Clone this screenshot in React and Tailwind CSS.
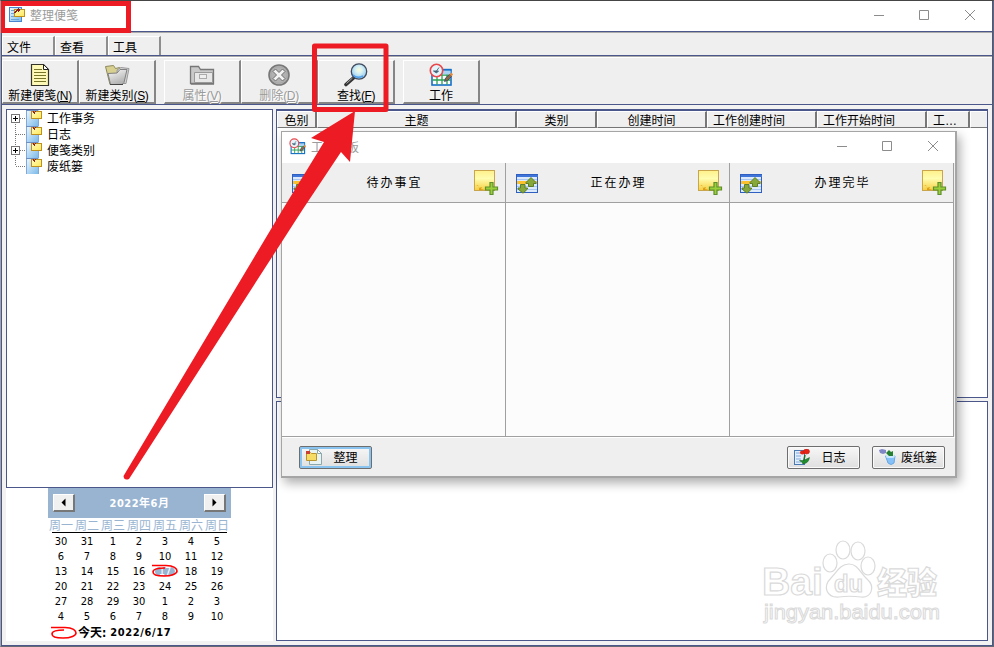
import React from 'react';

const Svg = ({ w, h = w, vb, children, className = '' }) => (
  <svg width={w} height={h} viewBox={vb || `0 0 ${w} ${h}`} className={`block shrink-0 ${className}`}>{children}</svg>
);

function NotesIcon({ small }) {
  return (
    <Svg w={small ? 16 : 17} h={16} vb={small ? '0 0 16 16' : '0 0 17 16'}>
      <defs>
        <linearGradient id="page" x1="0" y1="0" x2="1" y2="1">
          <stop offset="0" stopColor="#f4faff" />
          <stop offset="1" stopColor="#77b8e8" />
        </linearGradient>
        <linearGradient id="memo" x1="0" y1="0" x2="1" y2="1">
          <stop offset="0" stopColor="#fffdb8" />
          <stop offset="1" stopColor="#ffe75a" />
        </linearGradient>
      </defs>
      {small ? (
        <>
          <rect x="0" y="0" width="13" height="16" fill="url(#page)" />
          <path d="M0.500 0v16M12.500 9v7" stroke="#7fa9dc" />
          <path d="M0 0.500h12" stroke="#6f8fc0" />
          <rect x="5.500" y="1.500" width="10" height="7" fill="url(#memo)" stroke="#c0901c" />
          <path d="M7 1h1v1h1v2H8V3H7zM9 1h1v1H9z" fill="#9b1c24" />
        </>
      ) : (
        <>
          <rect x="0.500" y="0.500" width="12" height="14" fill="url(#page)" stroke="#4a86d0" />
          <path d="M2 3.500h3M2 6.500h3M2 9.500h3M2 12.500h8" stroke="#6ba3dc" />
          <rect x="5.500" y="2.500" width="10" height="7" fill="url(#memo)" stroke="#c0901c" />
          <path d="M5 5h1V4h1V3h1V2h1V1h1v1h1v2h-1v1H9V4H8v1H7v1H5z" fill="#8d1d20" />
        </>
      )}
    </Svg>
  );
}

function WorkIcon({ size }) {
  return (
    <Svg w={size} vb="0 0 24 24">
      <rect x="3" y="7" width="19" height="15" fill="#fff" stroke="#1470c8" strokeWidth="1.600" />
      <path d="M3.500 12h18M3.500 17h18M8 7.500v14M13 7.500v14M18 7.500v14" stroke="#2aa052" strokeWidth="1.300" />
      <path d="M13.500 7.500h8v4h-8z" fill="#a9d3f5" />
      <path d="M12.500 6.600h10" stroke="#1470c8" strokeWidth="1.600" />
      <circle cx="7.500" cy="7.500" r="6.200" fill="#e4f4fb" stroke="#e9484d" strokeWidth="1.600" />
      <path d="M4.500 8h5L7.500 10zM7.500 8l2.500-3.500" stroke="#44647c" strokeWidth="0.900" fill="#44647c" />
      <path d="M15.500 18.500l1-3.500 4-3.500 2 2-4 4z" fill="#8b6b43" stroke="#34346b" strokeWidth="0.700" />
      <path d="M20.500 11.500l2-2 1.500 2-1.500 2z" fill="#e68a37" />
    </Svg>
  );
}

function PageIcon() {
  return (
    <Svg w={24}>
      <path d="M3.500 1.500h12l5 5v16h-17z" fill="#fff9b8" stroke="#34342a" strokeWidth="1.200" />
      <path d="M15.500 1.500v5h5z" fill="#fff" stroke="#222" />
      <path d="M6 6.500h8M6 9.500h12M6 12.500h12M6 15.500h12M6 18.500h12" stroke="#77752a" />
    </Svg>
  );
}

function FolderIcon() {
  return (
    <Svg w={26} h={24}>
      <defs>
        <linearGradient id="folder" x1="0" y1="0" x2="0.500" y2="1">
          <stop offset="0" stopColor="#fafafa" />
          <stop offset="1" stopColor="#b1b1b1" />
        </linearGradient>
      </defs>
      <path d="M1.500 3.500l8-1 2 3 4-1v17H6z" fill="#d8d090" stroke="#8d895f" />
      <path d="M13 7l4-2.500 8 1-3 15h-8z" fill="#d4d4d4" stroke="#999" />
      <path d="M4 10.500l9-.5 3-3.500h7l-3 13-2 2H6.500z" fill="url(#folder)" stroke="#808080" />
      <path d="M6 21.500h13" stroke="#444" />
    </Svg>
  );
}

function PropertyIcon() {
  return (
    <Svg w={26} h={24}>
      <path d="M1.500 20.500v-17h8l2 3h13v14z" fill="#c9c9c9" stroke="#777" strokeWidth="1.300" />
      <path d="M5.500 19.500v-10h18v10z" fill="#e7e7e7" stroke="#999" />
      <rect x="10.500" y="11.500" width="7" height="4" fill="#eee" stroke="#aaa" />
      <path d="M2 21h23" stroke="#777" strokeWidth="1.400" />
    </Svg>
  );
}

function DeleteIcon() {
  return (
    <Svg w={24}>
      <circle cx="12" cy="12" r="10" fill="#b1b1b1" stroke="#777" strokeWidth="1.600" />
      <circle cx="12" cy="12" r="8.200" fill="none" stroke="#a8a8a8" />
      <path d="M6 8.500L8.500 6l3.500 3.500L15.500 6 18 8.500 14.500 12l3.500 3.500-2.500 2.500-3.500-3.500L8.500 18 6 15.500 9.500 12z" fill="#f2f2f2" stroke="#6d6d6d" />
    </Svg>
  );
}

function FindIcon() {
  return (
    <Svg w={24}>
      <defs>
        <radialGradient id="lens" cx="0.500" cy="0.400">
          <stop offset="0" stopColor="#fffbd5" />
          <stop offset="0.450" stopColor="#d7f1f4" />
          <stop offset="1" stopColor="#9ed0f2" />
        </radialGradient>
      </defs>
      <path d="M2 21.500l8-7" stroke="#333" strokeWidth="3.600" strokeLinecap="round" />
      <path d="M2.500 20.500l6-5.500" stroke="#aaa" />
      <circle cx="15" cy="8.500" r="7.700" fill="url(#lens)" stroke="#414a5c" strokeWidth="1.300" />
      <path d="M9 12q4 4 10 1" stroke="#4f9fea" strokeWidth="1.500" fill="none" />
    </Svg>
  );
}

function Label({ text, k, disabled }) {
  return (
    <span className={`whitespace-nowrap text-[12px] leading-[14px] ${disabled ? 'text-[#9a9a9a] [text-shadow:1px_1px_0_#fff]' : 'text-black'}`}>
      {text}
      {k && <span className="tracking-[-0.400px]">(<u className="underline-offset-1">{k}</u>)</span>}
    </span>
  );
}

function Tool({ icon, text, k, disabled, className = '' }) {
  return (
    <div className={`flex h-[44px] w-[77px] shrink-0 flex-col items-center border-t border-r-2 border-b-2 border-l border-t-white border-l-white border-r-[#858585] border-b-[#858585] bg-[#efefef] pt-[2px] ${className}`}>
      {icon}
      <div className="mt-[2px] flex h-[14px] items-center"><Label text={text} k={k} disabled={disabled} /></div>
    </div>
  );
}

function WindowControls({ className = '' }) {
  return (
    <Svg w={102} h={12} className={className}>
      <path d="M0 6.500h10M45.500 1.500h9v9h-9zM91 1l10 10M101 1l-10 10" fill="none" stroke="#8c8c8c" />
    </Svg>
  );
}

const heads = [
  ['色别', 'w-[40px] justify-center border-r-2'], ['主题', 'w-[200px] justify-center border-r-2'], ['类别', 'w-[80px] justify-center border-r-2'],
  ['创建时间', 'w-[110px] justify-center border-r-2'], ['工作创建时间', 'w-[110px] pl-[5px] border-r-2'], ['工作开始时间', 'w-[110px] pl-[5px] border-r-2'],
  ['工…', 'w-[43px] pl-[5px] border-r-2'], ['', 'grow'],
];

function TreeItem({ name, expandable, last }) {
  return (
    <div className="flex h-[16px] items-center">
      <Svg w={27} h={16}>
        <path d={last ? 'M8.500 0v8' : expandable === 'first' ? 'M8.500 8v8' : 'M8.500 0v16'} stroke="#777" strokeDasharray="1 1" />
        <path d="M9 8.500h10" stroke="#777" strokeDasharray="1 1" />
        {expandable && <><rect x="4.500" y="4.500" width="8" height="8" fill="#fff" stroke="#777" /><path d="M6 8.500h5M8.500 6v5" stroke="#000" /></>}
      </Svg>
      <div className="-ml-[8px]"><NotesIcon small /></div>
      <span className="mt-[2px] ml-[5px] text-[12px] leading-[16px]">{name}</span>
    </div>
  );
}

const days = [30, 31, 1, 2, 3, 4, 5, 6, 7, 8, 9, 10, 11, 12, 13, 14, 15, 16, 17, 18, 19, 20, 21, 22, 23, 24, 25, 26, 27, 28, 29, 30, 1, 2, 3, 4, 5, 6, 7, 8, 9, 10];

const TodayRing = ({ className = '' }) => (
  <Svg w={26} h={14} className={className}>
    <path d="M0 1.500h14c8 0 11 3 11 5.500s-5 5-13 5S1 10.500 1 8s5-4 12-4" fill="none" stroke="#f00" strokeWidth="1.600" />
  </Svg>
);

function MonthButton({ left }) {
  return (
    <div className="flex h-[18px] w-[22px] items-center justify-center border-t border-r-2 border-b-2 border-l border-t-white border-l-white border-r-[#777] border-b-[#777] bg-[#f0f0f0]">
      <Svg w={5} h={9}><path d={left ? 'M4.500 0.500v8l-4-4z' : 'M0.500 0.500v8l4-4z'} /></Svg>
    </div>
  );
}

function Calendar() {
  return (
    <div className="h-[153px] w-[267px] bg-white pl-[42px] [font-family:'DejaVu_Sans_Condensed','DejaVu_Sans','Noto_Sans_CJK_SC',sans-serif]">
      <div className="w-[183px]">
        <div className="flex h-[30px] items-center justify-between bg-[#99b4d1] px-[5px]">
          <MonthButton left />
          <span className="mt-[2px] text-[11px] font-bold tracking-[0.500px] text-white">2022年6月</span>
          <MonthButton />
        </div>
        <div className="mt-[1px] grid h-[13px] w-[182px] grid-cols-7 text-center text-[12px] leading-[15px] text-[#99b4d1]">
          {['周一', '周二', '周三', '周四', '周五', '周六', '周日'].map((d) => <span key={d}>{d}</span>)}
        </div>
        <div className="ml-[4px] h-[1px] w-[175px] bg-black" />
        <div className="mt-[1px] grid w-[182px] grid-cols-7 text-center text-[11px] leading-[15px]">
          {days.map((d, i) => (
            <div key={i} className="relative h-[15px]">
              {i === 18 && <div className="absolute top-[3px] left-[3px] h-[9px] w-[20px] rounded-full bg-[#99b4d1]" />}
              <span className={`relative ${i === 18 ? 'text-white' : ''}`}>{d}</span>
              {i === 18 && <TodayRing className="absolute top-0 left-0" />}
            </div>
          ))}
        </div>
        <div className="mt-[2px] ml-[3px] flex h-[14px] items-center whitespace-nowrap text-[11px] font-bold">
          <TodayRing /><span className="ml-[1px] text-[12px]">今天:</span><span className="ml-[4px] tracking-[0.600px]">2022/6/17</span>
        </div>
      </div>
    </div>
  );
}

const SortIcon = () => (
  <Svg w={24} h={20}>
    <rect x="0.500" y="0.500" width="21" height="18" fill="#dceafc" stroke="#2f5fc0" />
    <path d="M1 2h21" stroke="#3f74d8" strokeWidth="2" />
    <path d="M1 5.500h20M1 12.500h20M1 15.500h20" stroke="#a9c6f0" />
    <path d="M1 8.500h20" stroke="#fbc02d" strokeWidth="3" />
    <path d="M15 3.500l5 5v1h-2.500v3h-5v-3H10v-1z" fill="#86a83a" stroke="#5d7d26" />
    <path d="M4.500 10.500h4.500V14h2.500v1L7 19.200 2 15v-1h2.500z" fill="#86a83a" stroke="#5d7d26" />
  </Svg>
);

const AddNoteIcon = () => (
  <Svg w={25} h={25}>
    <defs>
      <linearGradient id="note" x1="0" y1="0" x2="0" y2="1">
        <stop offset="0" stopColor="#fff08a" /><stop offset="0.400" stopColor="#fffdb0" /><stop offset="1" stopColor="#f6ce40" />
      </linearGradient>
    </defs>
    <rect x="0.500" y="0.500" width="20" height="20" fill="url(#note)" stroke="#c9a54b" />
    <path d="M1 15q5 0 4 5h6l-4-1 1-2-3 1-1-3z" fill="#dc9e18" />
    <path d="M16 12.500h3v4.500h4.500v3H19v4.500h-3V20h-4.500v-3H16z" fill="#9bcf3a" stroke="#5e8f2c" strokeWidth="1.200" />
  </Svg>
);

function DialogButton({ icon, text, active, className = '' }) {
  return (
    <div className={`flex h-[23px] w-[73px] items-center rounded-[2px] border border-[#6e6e6e] bg-linear-to-b from-[#f7f7f7] to-[#dfdfdf] pl-[6px] ${active ? 'shadow-[inset_0_0_0_2px_#88c4ef]' : 'shadow-[inset_0_0_0_1px_#fafafa]'} ${className}`}>
      {icon}
      <span className="mt-[2px] mr-[2px] grow text-center text-[12px] leading-[20px]">{text}</span>
    </div>
  );
}

const TidyIcon = () => (
  <Svg w={16}>
    <path d="M3.500 0.500h8l4 4v11h-12z" fill="#e9f3f2" stroke="#8ba9ad" />
    <path d="M11.500 0.500v4h4z" fill="#fff" stroke="#8ba9ad" />
    <path d="M0.500 3.500h4l1 1h5v7h-10z" fill="#f6dc64" stroke="#b8942f" />
    <path d="M0 2h4v3H0z" fill="#c94133" />
  </Svg>
);
const DiaryIcon = () => (
  <Svg w={16}>
    <rect x="0.500" y="1.500" width="10" height="14" fill="#e3eefc" stroke="#4a79b2" />
    <path d="M2 4h5M2 7h5M2 10h5M2 13h5" stroke="#83a9d8" />
    <path d="M11 6l-2 9" stroke="#22702a" strokeWidth="1.500" />
    <ellipse cx="8.500" cy="3.500" rx="2.500" ry="2" fill="#e82115" />
    <ellipse cx="12.500" cy="2.500" rx="3" ry="2.500" fill="#e82115" stroke="#b01b12" strokeWidth="0.500" />
    <path d="M5.500 11.500l4 0 6-3q-1 6-6 6z" fill="#218e2c" stroke="#145b24" strokeWidth="0.500" />
  </Svg>
);
const TrashIcon = () => (
  <Svg w={17} h={16}>
    <path d="M6.500 7q5 3 9.500 0l-1 7q-3 3-6 0z" fill="#86c2fa" stroke="#6aa6e0" />
    <ellipse cx="11.300" cy="7.500" rx="4.500" ry="1.500" fill="#c8e8ff" />
    <path d="M7 4l3-3 2 2 2-1v5h-4z" fill="#268034" />
    <path d="M0 1l3-1 4 1v3L4 5 1 4z" fill="#7f87c5" />
  </Svg>
);

function Dialog() {
  return (
    <div className="absolute top-[131px] left-[281px] flex h-[347px] w-[676px] flex-col border border-r-2 border-b-2 border-[#a5a5a5] bg-[#efefef] shadow-[3px_5px_10px_rgba(0,0,0,0.32)]">
      <div className="flex h-[31px] shrink-0 items-center bg-white pr-[16px] pl-[7px]">
        <div className="mt-[-2px]"><WorkIcon size={17} /></div>
        <span className="ml-[5px] text-[12px] text-[#9b9b9b]">工作面板</span>
        <WindowControls className="mt-[-3px] ml-auto" />
      </div>
      <div className="flex w-[672px] shrink-0">
        {['待办事宜', '正在办理', '办理完毕'].map((t) => (
          <div key={t} className="w-[224px] border-r border-[#a0a0a0]">
            <div className="flex h-[40px] items-center border-b border-[#a0a0a0] pr-[6px] pl-[10px]">
              <div className="mt-[2px]"><SortIcon /></div>
              <span className="mr-[1px] grow text-center text-[12px] tracking-[2px]">{t}</span>
              <AddNoteIcon />
            </div>
            <div className="h-[234px] border-b border-[#a0a0a0] bg-[#fcfcfc]" />
          </div>
        ))}
      </div>
      <div className="flex grow items-center border-t border-white pr-[10px] pl-[17px]">
        <DialogButton icon={<TidyIcon />} text="整理" active />
        <DialogButton icon={<DiaryIcon />} text="日志" className="ml-auto" />
        <DialogButton icon={<TrashIcon />} text="废纸篓" className="ml-[12px]" />
      </div>
    </div>
  );
}

function Watermark() {
  return (
    <svg className="absolute top-[534px] left-[756px] [font-family:'Liberation_Sans','Noto_Sans_CJK_SC',sans-serif]" width="190" height="96" fill="#fff" stroke="#dadada" strokeWidth="1.200">
      <text x="6" y="61" fontSize="39" fontWeight="700" textLength="61" lengthAdjust="spacingAndGlyphs">Bai</text>
      <ellipse cx="74" cy="29" rx="7" ry="9" /><ellipse cx="87" cy="16" rx="7" ry="9" />
      <ellipse cx="102" cy="17" rx="7" ry="9" /><ellipse cx="112" cy="32" rx="7" ry="9" />
      <path d="M93 30c9 0 11 9 18 15 9 8 4 19-6 18-8-1-15-1-22 0-12 1-17-10-8-19 6-6 9-14 18-14z" />
      <text x="78" y="58" fontSize="23" fontWeight="700" textLength="29" lengthAdjust="spacingAndGlyphs">du</text>
      <text x="121" y="60" fontSize="31" fontWeight="900" textLength="60" lengthAdjust="spacingAndGlyphs">经验</text>
      <text x="8" y="85" fontSize="20" textLength="176" lengthAdjust="spacingAndGlyphs" strokeWidth="1">jingyan.baidu.com</text>
    </svg>
  );
}

export default function App() {
  return (
    <div className="relative flex h-[647px] w-[994px] overflow-hidden border-t border-r border-b border-l border-t-[#454545] border-r-[#65666d] border-b-[#686a73] border-l-[#a2a4aa] bg-white text-[12px] text-black [font-family:'Liberation_Sans','Noto_Sans_CJK_SC',sans-serif]">
      <div className="flex w-[992px] flex-col border-r border-b border-l border-[#4b568b] bg-[#efefef]">
        <div className="flex h-[30px] shrink-0 items-center bg-white pr-[16px] pl-[7px]">
          <div className="mt-[-2px]"><NotesIcon /></div>
          <span className="ml-[4px] text-[12px] text-[#9b9b9b]">整理便笺</span>
          <WindowControls className="mt-[-3px] ml-auto" />
        </div>
        <div className="flex h-[24px] shrink-0 border-t border-[#4b568b] pt-[4px] shadow-[inset_0_1px_0_#aaa]">
          {['文件', '查看', '工具'].map((m) => (
            <div key={m} className="h-[19px] w-[53px] border-t border-r-2 border-l border-t-white border-l-white border-r-[#8e8e8e] pt-[3px] pl-[4px] leading-[17px]">{m}</div>
          ))}
        </div>
        <div className="flex h-[49px] shrink-0 border-t border-[#4b568b] bg-[#efefef] pt-[4px] shadow-[inset_0_1px_0_#aaa,inset_0_2px_0_#fff]">
          <Tool icon={<PageIcon />} text="新建便笺" k="N" />
          <Tool icon={<FolderIcon />} text="新建类别" k="S" />
          <Tool icon={<PropertyIcon />} text="属性" k="V" disabled className="ml-[8px]" />
          <Tool icon={<DeleteIcon />} text="删除" k="D" disabled />
          <Tool icon={<FindIcon />} text="查找" k="F" />
          <Tool icon={<WorkIcon size={24} />} text="工作" className="ml-[8px]" />
        </div>
        <div className="flex grow gap-[3px] border-t border-[#4b568b] bg-[#f2f2f2] pt-[4px] pr-[4px] pb-[4px] pl-[4px]">
          <div className="w-[267px] shrink-0">
            <div className="h-[379px] border border-[#4b568b] bg-white">
              <TreeItem name="工作事务" expandable="first" />
              <TreeItem name="日志" />
              <TreeItem name="便笺类别" expandable="mid" />
              <TreeItem name="废纸篓" last />
            </div>
            <Calendar />
          </div>
          <div className="flex w-[712px] shrink-0 flex-col gap-[3px]">
            <div className="h-[289px] border border-t-2 border-[#4b568b] bg-white">
              <div className="flex h-[17px] bg-[#efefef]">
                {heads.map(([t, c]) => (
                  <div key={t} className={`flex shrink-0 items-center border-t border-b border-l border-t-white border-r-[#777] border-b-[#777] border-l-white pt-[2px] leading-[14px] ${c}`}>{t}</div>
                ))}
              </div>
            </div>
            <div className="h-[240px] border border-[#4b568b] bg-white" />
          </div>
        </div>
      </div>
      <div className="absolute -top-px -left-px h-[647px] w-[994px]">
        <Watermark />
        <Dialog />
        <svg className="absolute top-0 left-0" width="994" height="647">
          <rect x="2.500" y="3.500" width="126" height="27" fill="none" stroke="#ed1c24" strokeWidth="5" />
          <rect x="314.500" y="46" width="71.500" height="63.500" fill="none" stroke="#ed1c24" strokeWidth="5" strokeLinejoin="round" />
          <path d="M355 111L311 138L324 142L283 209L123.500 476Q124 481 129 479L303 209L341 152L350 162z" fill="#ed1c24" />
        </svg>
      </div>
    </div>
  );
}
